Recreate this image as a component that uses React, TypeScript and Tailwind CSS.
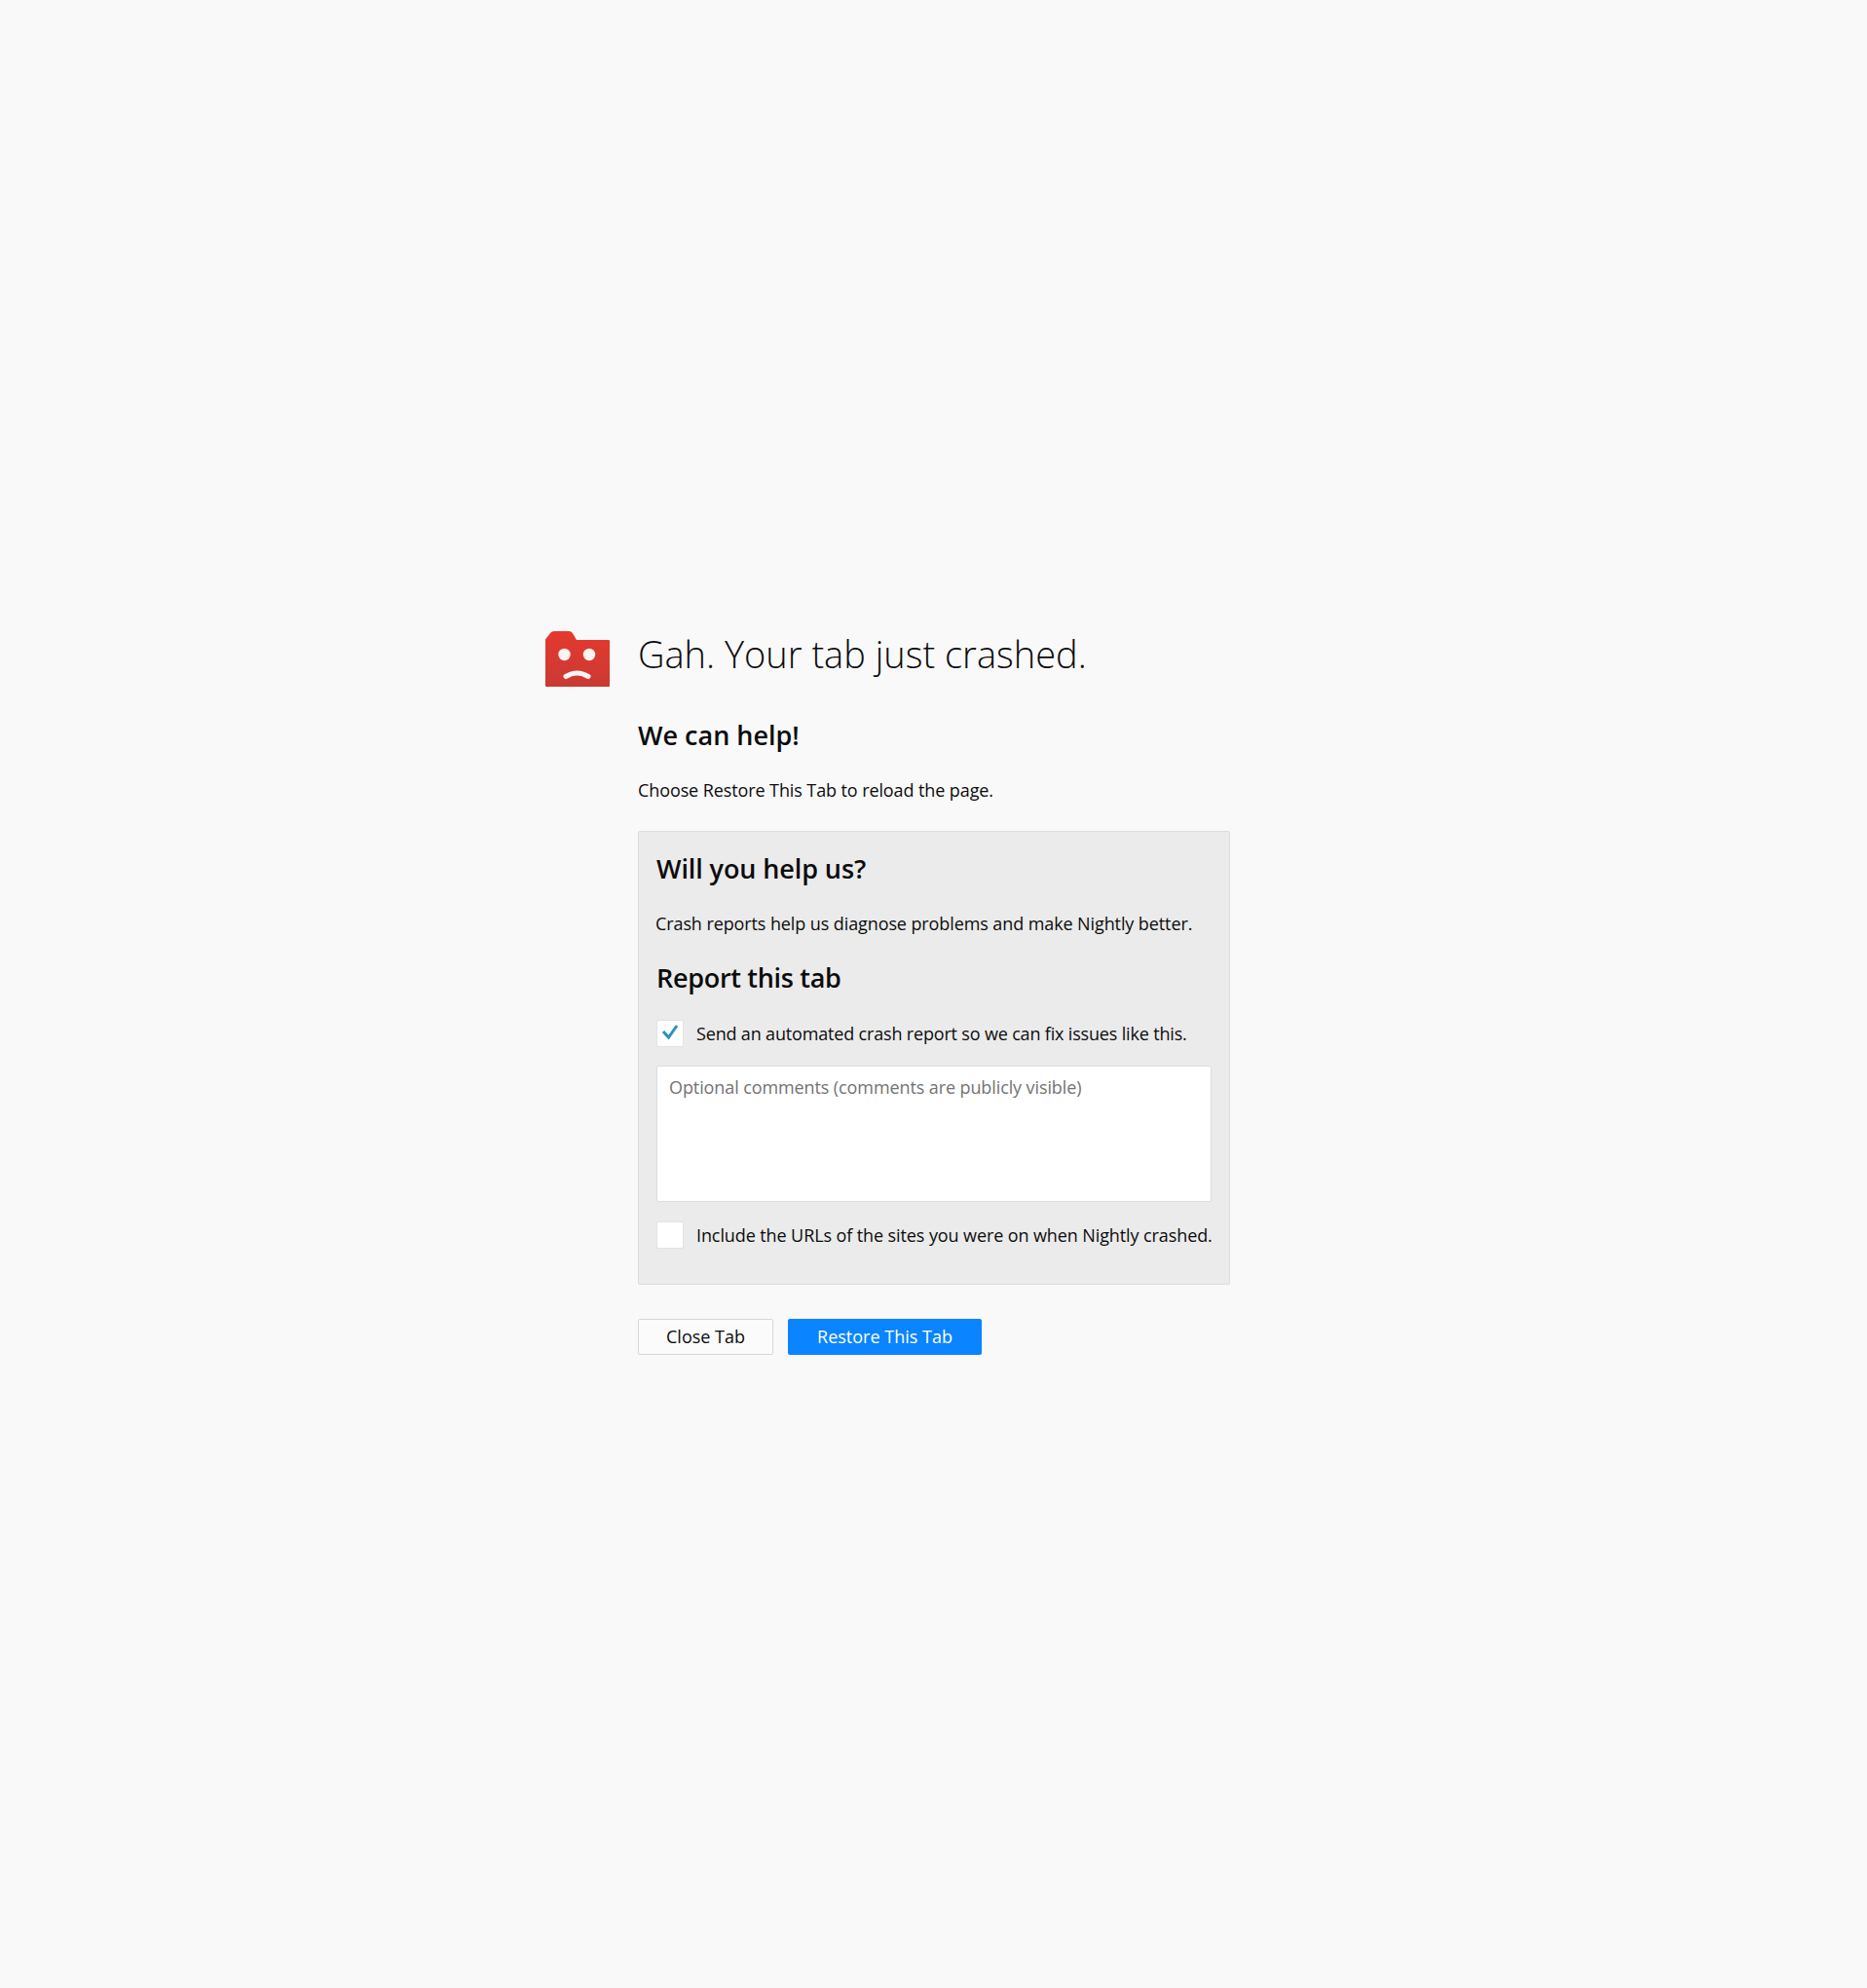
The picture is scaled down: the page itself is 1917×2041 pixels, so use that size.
const font = "font-['Open_Sans','Noto_Sans',sans-serif]";

function CrashIcon() {
  return (
    <svg width="66" height="57" viewBox="0 0 66 57" className="shrink-0">
      <defs>
        <linearGradient id="crash" x1="0" y1="0" x2="0" y2="1">
          <stop offset="0" stopColor="#e5392e" />
          <stop offset="1" stopColor="#c93a32" />
        </linearGradient>
      </defs>
      <path
        d="M0 8.5 L5 2 Q6.5 0 9 0 H24 Q27 0 28.5 3 L32 9 H65 Q66 9 66 10 V56 Q66 57 65 57 H1 Q0 57 0 56 Z"
        fill="url(#crash)"
      />
      <circle cx="19.5" cy="24" r="6.2" fill="#fdf3f2" />
      <circle cx="45" cy="24" r="6.2" fill="#fdf3f2" />
      <path d="M21 46.5 Q32.5 39.5 44 46.5" fill="none" stroke="#fdf3f2" strokeWidth="5" strokeLinecap="round" />
    </svg>
  );
}

function Checkbox({ checked }: { checked?: boolean }) {
  return (
    <span className="w-[28px] h-[28px] shrink-0 bg-white rounded-[2px] border border-[#e3e3e3] flex items-center justify-center">
      {checked && (
        <svg width="18" height="20" viewBox="0 0 18 20">
          <path d="M2 8 L7.5 14 L16 2" fill="none" stroke="#2e8fc0" strokeWidth="3" />
        </svg>
      )}
    </span>
  );
}

export default function App() {
  return (
    <main className={`min-h-[2041px] bg-[#f9f9fa] flex items-center justify-center text-[#0c0c0d] ${font}`}>
      <div className="w-[797px] flex gap-[29px] pb-[5px]">
        <div className="pt-[2px]">
          <CrashIcon />
        </div>

        <div className="w-[608px]">
          <h1 className="text-[38px] leading-[50px] font-light">Gah. Your tab just crashed.</h1>

          <h2 className="mt-[41px] text-[27px] leading-[36px] font-semibold">We can help!</h2>

          <p className="mt-[25px] text-[18px] leading-[26px] tracking-[-0.1px]">Choose Restore This Tab to reload the page.</p>

          <div className="mt-[29px] bg-[#ebebeb] border border-[#dcdcdc] rounded-[2px] px-[18px] pt-[20px] pb-[36px]">
            <h2 className="text-[27px] leading-[36px] tracking-[-0.1px] font-semibold">Will you help us?</h2>

            <p className="mt-[25px] -ml-[1px] text-[18px] leading-[26px] tracking-[-0.1px]">
              Crash reports help us diagnose problems and make Nightly better.
            </p>

            <h2 className="mt-[25px] text-[27px] leading-[36px] tracking-[-0.3px] font-semibold">Report this tab</h2>

            <label className="mt-[25px] flex items-center gap-[13px] text-[18px] leading-[26px] tracking-[-0.17px]">
              <Checkbox checked />
              Send an automated crash report so we can fix issues like this.
            </label>

            <div className="mt-[19px] h-[140px] bg-white border border-[#dcdcdc] rounded-[2px] px-[12px] py-[8px] text-[18px] leading-[26px] tracking-[-0.1px] text-[#737373]">
              Optional comments (comments are publicly visible)
            </div>

            <label className="mt-[20px] flex items-center gap-[13px] text-[18px] leading-[26px] tracking-[-0.1px] whitespace-nowrap">
              <Checkbox />
              Include the URLs of the sites you were on when Nightly crashed.
            </label>
          </div>

          <div className="mt-[35px] flex gap-[15px]">
            <button className="h-[37px] w-[139px] bg-[#fbfbfb] border border-[#d7d7db] rounded-[2px] text-[18px]">
              Close Tab
            </button>
            <button className="h-[37px] w-[199px] bg-[#0a84ff] rounded-[2px] text-[18px] text-white">
              Restore This Tab
            </button>
          </div>
        </div>
      </div>
    </main>
  );
}
